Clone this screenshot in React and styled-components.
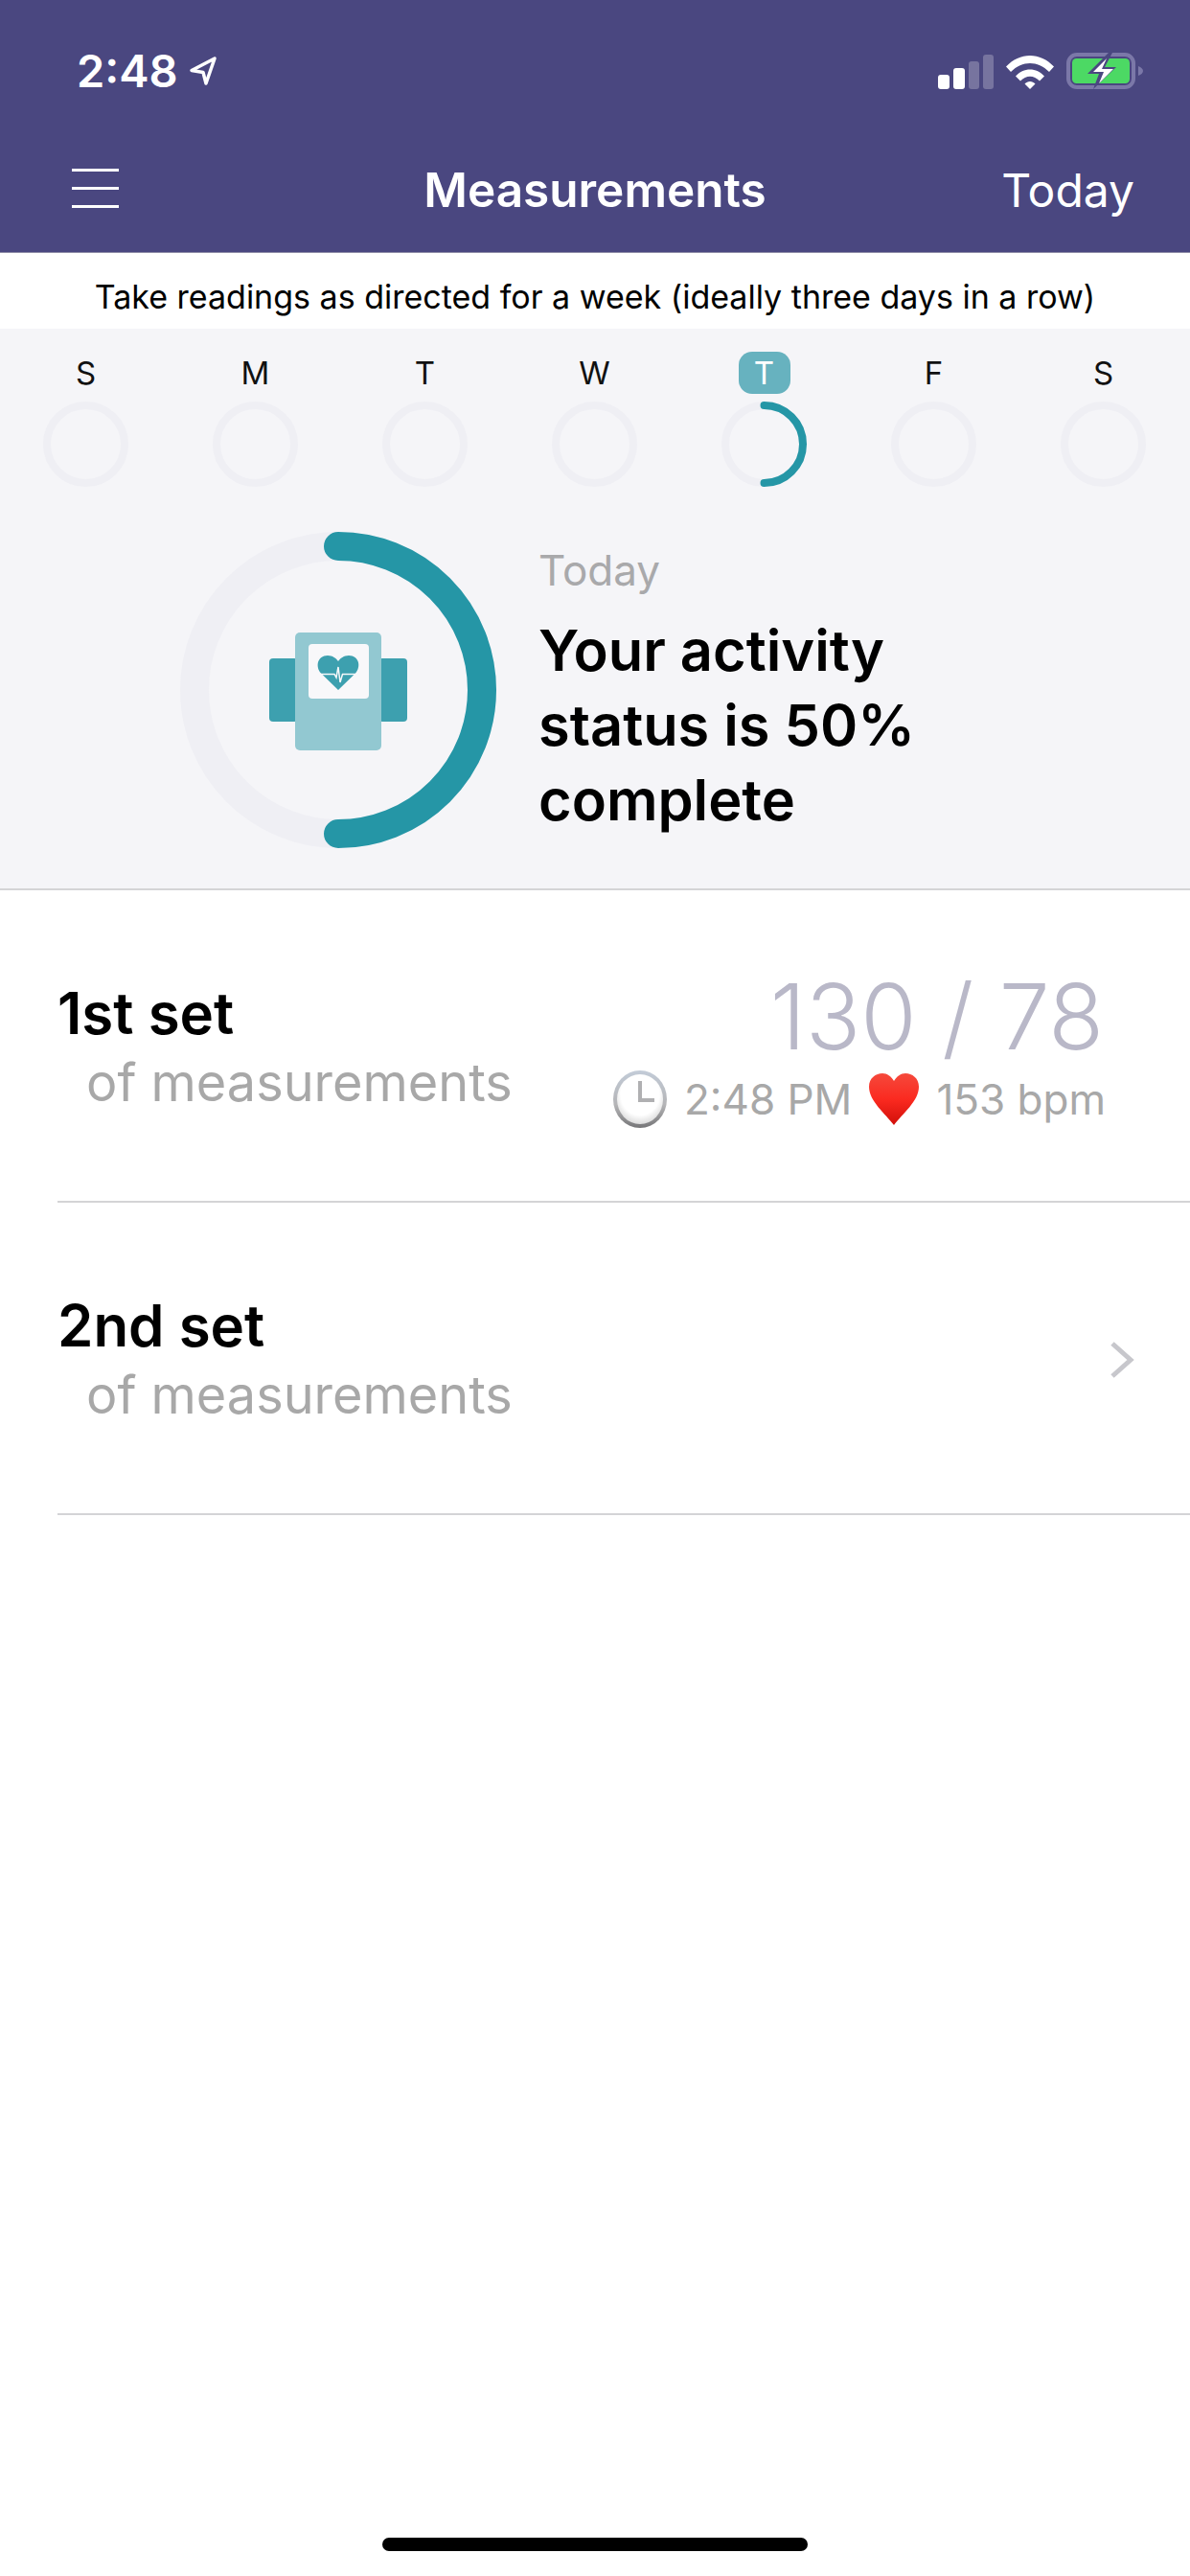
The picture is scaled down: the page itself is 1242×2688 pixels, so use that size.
import React from "react";
import styled, { createGlobalStyle } from "styled-components";

const GlobalStyle = createGlobalStyle`
  html, body {
    margin: 0;
    padding: 0;
    background: #fff;
    font-family: Inter, "Liberation Sans", sans-serif;
  }
`;

const days = ["S", "M", "T", "W", "T", "F", "S"];
const TODAY_INDEX = 4;

function Signal() {
  return (
    <svg width="58" height="36" viewBox="0 0 58 36">
      <rect x="0" y="21" width="12" height="15" rx="3" fill="#fff" />
      <rect x="16" y="14" width="12" height="22" rx="3" fill="#fff" />
      <rect x="32" y="7" width="11" height="29" rx="3" fill="#77749f" />
      <rect x="47" y="0" width="11" height="36" rx="3" fill="#77749f" />
    </svg>
  );
}

function Wifi() {
  return (
    <svg width="50" height="36" viewBox="0 0 50 36">
      <path d="M0 12.5C14-3 36-3 50 12.5L45 18C33 6 17 6 5 18Z" fill="#fff" />
      <path d="M10 22.5C18 13 32 13 40 22.5L35 27.5C29 21 21 21 15 27.5Z" fill="#fff" />
      <path d="M19.5 30.5C22.5 27 27.5 27 30.5 30.5L25 36Z" fill="#fff" />
    </svg>
  );
}

function Battery() {
  return (
    <svg width="80" height="38" viewBox="0 0 80 38">
      <rect x="2" y="2" width="68" height="34" rx="9" fill="none" stroke="#7b78a8" strokeWidth="4" />
      <rect x="6" y="6" width="60" height="26" rx="4.5" fill="#4cd964" />
      <path d="M75 14c3 1 5 3 5 5s-2 4-5 5Z" fill="#7b78a8" />
      <path d="M44 0 22 22h12l-6 16 24-23H40l8-15Z" fill="#4a4780" />
      <path d="M42 6 28 20h11l-5 12 15-15H37Z" fill="#fff" />
    </svg>
  );
}

function Ring({ size, stroke, progress }) {
  const r = (size - stroke) / 2;
  const c = size / 2;
  return (
    <svg width={size} height={size} viewBox={`0 0 ${size} ${size}`}>
      <circle cx={c} cy={c} r={r} fill="none" stroke="#efeff4" strokeWidth={stroke} />
      {progress > 0 && (
        <path
          d={`M${c} ${stroke / 2}A${r} ${r} 0 0 1 ${c} ${size - stroke / 2}`}
          fill="none"
          stroke="#2596a6"
          strokeWidth={stroke}
          strokeLinecap="round"
        />
      )}
    </svg>
  );
}

function CuffIcon() {
  return (
    <svg width="144" height="123" viewBox="0 0 144 123">
      <rect x="0" y="27" width="30" height="66" rx="4" fill="#3da0af" />
      <rect x="114" y="27" width="30" height="66" rx="4" fill="#3da0af" />
      <rect x="27" y="0" width="90" height="123" rx="5" fill="#92c8d1" />
      <rect x="41" y="12" width="63" height="57" rx="4" fill="#f8f8fa" />
      <path
        d="M72 60 54 42.5C48 36 50 24 61 24c5 0 9 3 11 6 2-3 6-6 11-6 11 0 13 12 7 18.5Z"
        fill="#3da0af"
      />
      <path
        d="M50 43.5H68L70 47 72 36 74 52 76.500 43.500H94"
        fill="none"
        stroke="#f8f8fa"
        strokeWidth="1.5"
      />
    </svg>
  );
}

function ClockEmoji() {
  return (
    <svg width="56" height="60" viewBox="0 0 56 60">
      <defs>
        <linearGradient id="clockRim" x1="0" y1="0" x2="0" y2="1">
          <stop offset="0" stopColor="#c3ccd8" />
          <stop offset="0.6" stopColor="#b4b4b6" />
          <stop offset="1" stopColor="#767678" />
        </linearGradient>
        <radialGradient id="clockFace" cx="0.5" cy="0.4" r="0.6">
          <stop offset="0.7" stopColor="#ffffff" />
          <stop offset="1" stopColor="#dcdcdc" />
        </radialGradient>
      </defs>
      <ellipse cx="28" cy="30" rx="28" ry="30" fill="url(#clockRim)" />
      <ellipse cx="28" cy="30" rx="24" ry="26" fill="url(#clockFace)" />
      <path d="M28 11V31H43" fill="none" stroke="#b0b0b2" strokeWidth="4" />
    </svg>
  );
}

function HeartEmoji() {
  return (
    <svg width="52" height="54" viewBox="0 0 52 54">
      <defs>
        <linearGradient id="heartFill" x1="0" y1="0" x2="0" y2="1">
          <stop offset="0" stopColor="#f5493c" />
          <stop offset="0.5" stopColor="#fb2a20" />
          <stop offset="1" stopColor="#d10f0a" />
        </linearGradient>
      </defs>
      <path
        d="M26 54C17 42 0 29 0 14 0 5 7 0 14 0c5 0 9 3 12 8 3-5 7-8 12-8 7 0 14 5 14 14 0 15-17 28-26 40Z"
        fill="url(#heartFill)"
      />
    </svg>
  );
}

function App() {
  return (
    <Page>
      <GlobalStyle />
      <Header>
        <StatusBar>
          <StatusTime>
            2:48
            <svg width="32" height="32" viewBox="0 0 30 32">
              <path
                d="M27 3 3 15.500 15 17.500 18 29Z"
                fill="none"
                stroke="#fff"
                strokeWidth="3.500"
                strokeLinejoin="round"
              />
            </svg>
          </StatusTime>
          <StatusIcons>
            <Signal />
            <Wifi />
            <Battery />
          </StatusIcons>
        </StatusBar>
        <NavBar>
          <MenuButton aria-label="menu">
            <span />
            <span />
            <span />
          </MenuButton>
          <NavTitle>Measurements</NavTitle>
          <NavAction>Today</NavAction>
        </NavBar>
      </Header>

      <Notice>Take readings as directed for a week (ideally three days in a row)</Notice>

      <Summary>
        <Week>
          {days.map((day, i) => (
            <Day key={i}>
              <DayLabel $active={i === TODAY_INDEX}>{day}</DayLabel>
              <Ring size={89} stroke={8} progress={i === TODAY_INDEX ? 50 : 0} />
            </Day>
          ))}
        </Week>
        <Hero>
          <HeroRing>
            <Ring size={330} stroke={30} progress={50} />
            <HeroIcon>
              <CuffIcon />
            </HeroIcon>
          </HeroRing>
          <HeroText>
            <HeroCaption>Today</HeroCaption>
            <HeroStatus>
              Your activity
              <br />
              status is 50%
              <br />
              complete
            </HeroStatus>
          </HeroText>
        </Hero>
      </Summary>

      <SetRow>
        <SetName>
          <SetTitle>1st set</SetTitle>
          <SetSub>of measurements</SetSub>
        </SetName>
        <Reading>
          <ReadingValue>130 / 78</ReadingValue>
          <ReadingMeta>
            <ClockEmoji />
            <span>2:48 PM</span>
            <HeartEmoji />
            <span>153 bpm</span>
          </ReadingMeta>
        </Reading>
      </SetRow>

      <SetRow>
        <SetName>
          <SetTitle>2nd set</SetTitle>
          <SetSub>of measurements</SetSub>
        </SetName>
        <svg width="26" height="40" viewBox="0 0 26 40">
          <path d="M3 3 22 20 3 37" fill="none" stroke="#c7c7cc" strokeWidth="5" />
        </svg>
      </SetRow>

      <HomeIndicator />
    </Page>
  );
}

const Page = styled.div`
  display: flex;
  flex-direction: column;
  width: 1242px;
  height: 2688px;
  overflow: hidden;
  background: #fff;
`;

const Header = styled.header`
  height: 263px;
  background: #4a4780;
  border-bottom: 1px solid #8f8da8;
  color: #fff;
`;

const StatusBar = styled.div`
  display: flex;
  align-items: flex-start;
  justify-content: space-between;
  height: 148px;
  padding: 55px 49px 0 80px;
  box-sizing: border-box;
`;

const StatusTime = styled.div`
  display: flex;
  align-items: center;
  gap: 10px;
  font-size: 47px;
  line-height: 38px;
  font-weight: 600;
`;

const StatusIcons = styled.div`
  display: flex;
  align-items: flex-end;
  gap: 13px;
`;

const NavBar = styled.div`
  display: flex;
  align-items: center;
  justify-content: space-between;
  height: 100px;
  padding: 0 58px 0 75px;
  position: relative;
`;

const MenuButton = styled.div`
  display: flex;
  flex-direction: column;
  gap: 16px;
  width: 49px;
  margin-top: -4px;

  span {
    display: block;
    height: 3px;
    background: #fff;
  }
`;

const NavTitle = styled.div`
  position: absolute;
  left: 0;
  right: 0;
  text-align: center;
  font-size: 49.5px;
  font-weight: 600;
`;

const NavAction = styled.div`
  font-size: 48px;
  font-weight: 400;
`;

const Notice = styled.div`
  height: 79px;
  line-height: 92px;
  text-align: center;
  font-size: 34px;
  color: #000;
  background: #fff;
`;

const Summary = styled.section`
  height: 586px;
  background: #f5f5f8;
  border-bottom: 2px solid #d4d4d6;
  box-sizing: border-box;
`;

const Week = styled.div`
  display: grid;
  grid-template-columns: repeat(7, 177px);
  padding: 24px 0 0 1px;
`;

const Day = styled.div`
  display: flex;
  flex-direction: column;
  align-items: center;
  gap: 8px;
`;

const DayLabel = styled.div`
  width: 54px;
  height: 44px;
  border-radius: 14px;
  text-align: center;
  line-height: 44px;
  font-size: 33px;
  color: ${(props) => (props.$active ? "#fff" : "#111")};
  background: ${(props) => (props.$active ? "#67b2bf" : "transparent")};
`;

const Hero = styled.div`
  display: flex;
  align-items: center;
  gap: 44px;
  padding: 47px 0 0 188px;
`;

const HeroRing = styled.div`
  position: relative;
  width: 330px;
  height: 330px;
`;

const HeroIcon = styled.div`
  position: absolute;
  left: 93px;
  top: 105px;
`;

const HeroText = styled.div`
  display: flex;
  flex-direction: column;
  gap: 14px;
  margin-top: -2px;
`;

const HeroCaption = styled.div`
  font-size: 44px;
  line-height: 60px;
  color: #a9a9ab;
`;

const HeroStatus = styled.div`
  font-size: 59.5px;
  line-height: 78px;
  font-weight: 600;
  color: #000;
`;

const SetRow = styled.div`
  display: flex;
  align-items: center;
  justify-content: space-between;
  height: 326px;
  margin-left: 60px;
  padding: 4px 58px 0 0;
  border-bottom: 2px solid #d4d4d6;
  box-sizing: border-box;
`;

const SetName = styled.div`
  display: flex;
  flex-direction: column;
  gap: 6px;
`;

const SetTitle = styled.div`
  font-size: 60px;
  line-height: 68px;
  font-weight: 600;
  color: #000;
`;

const SetSub = styled.div`
  padding-left: 30px;
  font-size: 54px;
  line-height: 66px;
  color: #a8a8a8;
`;

const Reading = styled.div`
  display: flex;
  flex-direction: column;
  align-items: flex-end;
  margin-right: 30px;
`;

const ReadingValue = styled.div`
  margin-right: 2px;
  font-size: 94.5px;
  line-height: 104px;
  font-weight: 300;
  color: #b9b8c8;
`;

const ReadingMeta = styled.div`
  display: flex;
  align-items: center;
  gap: 18px;
  margin-top: 4px;
  font-size: 44px;
  line-height: 60px;
  color: #a8a8a8;
`;

const HomeIndicator = styled.div`
  width: 444px;
  height: 14px;
  margin: auto auto 26px;
  border-radius: 7px;
  background: #000;
`;

export default App;
